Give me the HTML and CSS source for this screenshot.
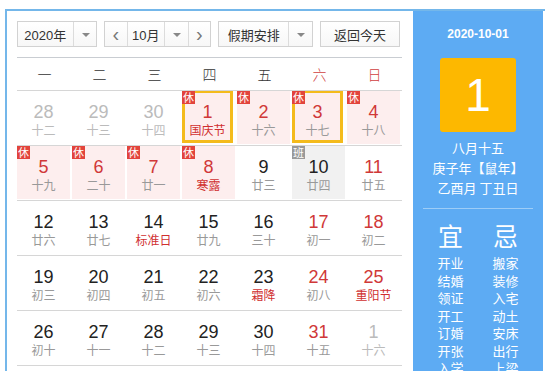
FILE: index.html
```html
<!DOCTYPE html>
<html>
	<head>
		<meta charset="UTF-8">
		<title>万年历</title>
		<link rel="stylesheet" href="styles.css">
	</head>
	<body>
		<div class="calendar">
			<div class="main">
				<div class="toolbar">
					<div class="select year"><span class="label">2020年</span><span class="arrow"></span></div>
					<div class="group">
						<span class="nav">&lsaquo;</span>
						<div class="select month"><span class="label">10月</span><span class="arrow"></span></div>
						<span class="nav">&rsaquo;</span>
					</div>
					<div class="select holiday"><span class="label">假期安排</span><span class="arrow"></span></div>
					<div class="button">返回今天</div>
				</div>
				<div class="weekdays">
					<span>一</span><span>二</span><span>三</span><span>四</span><span>五</span><span class="weekend">六</span><span class="weekend">日</span>
				</div>
				<div class="week">
					<div class="cell other"><b>28</b><i>十二</i></div>
					<div class="cell other"><b>29</b><i>十三</i></div>
					<div class="cell other"><b>30</b><i>十四</i></div>
					<div class="cell rest selected"><em>休</em><b>1</b><i class="fest">国庆节</i></div>
					<div class="cell rest"><em>休</em><b>2</b><i>十六</i></div>
					<div class="cell rest selected"><em>休</em><b>3</b><i>十七</i></div>
					<div class="cell rest"><em>休</em><b>4</b><i>十八</i></div>
				</div>
				<div class="week">
					<div class="cell rest"><em>休</em><b>5</b><i>十九</i></div>
					<div class="cell rest"><em>休</em><b>6</b><i>二十</i></div>
					<div class="cell rest"><em>休</em><b>7</b><i>廿一</i></div>
					<div class="cell rest"><em>休</em><b>8</b><i class="fest">寒露</i></div>
					<div class="cell"><b>9</b><i>廿三</i></div>
					<div class="cell work"><em>班</em><b>10</b><i>廿四</i></div>
					<div class="cell weekend"><b>11</b><i>廿五</i></div>
				</div>
				<div class="week">
					<div class="cell"><b>12</b><i>廿六</i></div>
					<div class="cell"><b>13</b><i>廿七</i></div>
					<div class="cell"><b>14</b><i class="fest">标准日</i></div>
					<div class="cell"><b>15</b><i>廿九</i></div>
					<div class="cell"><b>16</b><i>三十</i></div>
					<div class="cell weekend"><b>17</b><i>初一</i></div>
					<div class="cell weekend"><b>18</b><i>初二</i></div>
				</div>
				<div class="week">
					<div class="cell"><b>19</b><i>初三</i></div>
					<div class="cell"><b>20</b><i>初四</i></div>
					<div class="cell"><b>21</b><i>初五</i></div>
					<div class="cell"><b>22</b><i>初六</i></div>
					<div class="cell"><b>23</b><i class="fest">霜降</i></div>
					<div class="cell weekend"><b>24</b><i>初八</i></div>
					<div class="cell weekend"><b>25</b><i class="fest">重阳节</i></div>
				</div>
				<div class="week">
					<div class="cell"><b>26</b><i>初十</i></div>
					<div class="cell"><b>27</b><i>十一</i></div>
					<div class="cell"><b>28</b><i>十二</i></div>
					<div class="cell"><b>29</b><i>十三</i></div>
					<div class="cell"><b>30</b><i>十四</i></div>
					<div class="cell weekend"><b>31</b><i>十五</i></div>
					<div class="cell other"><b>1</b><i>十六</i></div>
				</div>
			</div>
			<div class="side">
				<div class="date">2020-10-01</div>
				<div class="today">1</div>
				<div class="lunar">
					<p>八月十五</p>
					<p>庚子年【鼠年】</p>
					<p>乙酉月 丁丑日</p>
				</div>
				<div class="almanac">
					<div class="col">
						<h2>宜</h2>
						<p>开业</p><p>结婚</p><p>领证</p><p>开工</p><p>订婚</p><p>开张</p><p>入学</p>
					</div>
					<div class="col">
						<h2>忌</h2>
						<p>搬家</p><p>装修</p><p>入宅</p><p>动土</p><p>安床</p><p>出行</p><p>上梁</p>
					</div>
				</div>
			</div>
		</div>
	</body>
</html>
```
FILE: styles.css
```css
body {
	margin: 0;
	background: #fff;
	color: #333;
	font-family: "Liberation Sans", Arial, "Noto Sans CJK SC", sans-serif;
	overflow: hidden;
}
.calendar {
	display: flex;
	width: 538px;
	margin: 9px 0 0 5px;
	border: 2px solid #74b7ea;
	border-right: 0;
	border-bottom: 0;
	height: 400px;
}
.main {
	width: 385px;
	padding: 10px 11px 0 10px;
	background: #fff;
}
.toolbar {
	display: flex;
	gap: 7px;
	height: 26px;
	font-size: 13px;
	margin-bottom: 10px;
}
.select, .group, .button {
	display: flex;
	align-items: stretch;
	border: 1px solid #d2d2d2;
	box-sizing: border-box;
	background: linear-gradient(#fff, #f7f7f7);
}
.select .label {
	display: flex;
	align-items: center;
	justify-content: center;
	border-right: 1px solid #dcdcdc;
}
.select .arrow {
	width: 23px;
	position: relative;
}
.select .arrow::after {
	content: "";
	position: absolute;
	left: 8px;
	top: 11px;
	border: 4px solid transparent;
	border-top: 4px solid #888;
	border-bottom: 0;
}
.year { width: 80px; }
.year .label { width: 56px; }
.group { width: 107px; }
.month { border: 0; background: none; width: 61px; }
.month .label { width: 37px; }
.month .arrow { border-right: 1px solid #dcdcdc; }
.group .nav {
	width: 23px;
	display: flex;
	align-items: center;
	justify-content: center;
	color: #777;
	font-size: 20px;
	border-right: 1px solid #dcdcdc;
}
.group .nav:last-child { border-right: 0; }
.holiday { width: 95px; }
.holiday .label { width: 71px; }
.button {
	width: 80px;
	align-items: center;
	justify-content: center;
}
.weekdays {
	display: grid;
	grid-template-columns: repeat(7, 1fr);
	border-top: 1px solid #c9cdd2;
	border-bottom: 1px solid #d6d6d6;
	height: 34px;
	box-sizing: border-box;
	align-items: center;
	text-align: center;
	font-size: 14px;
	font-family: "Noto Sans CJK SC", sans-serif;
	font-weight: 300;
}
.weekdays .weekend { color: #d04040; }
.week {
	display: grid;
	grid-template-columns: repeat(7, 53px);
	column-gap: 2px;
	height: 55px;
	padding: 0 0 1px 0;
	box-sizing: border-box;
	border-bottom: 1px solid #d6d6d6;
}
.cell {
	position: relative;
	display: flex;
	flex-direction: column;
	align-items: center;
	padding-top: 11px;
	box-sizing: border-box;
}
.cell b {
	font-weight: normal;
	font-size: 18px;
	line-height: 20px;
	color: #222;
}
.cell i {
	font-style: normal;
	font-size: 12px;
	line-height: 16px;
	color: #999;
	font-family: "Noto Sans CJK SC", sans-serif;
}
.cell i.fest { color: #d03030; }
.cell em {
	position: absolute;
	top: 0;
	left: 0;
	width: 13px;
	height: 13px;
	line-height: 13px;
	font-size: 11px;
	font-style: normal;
	color: #fff;
	background: #e2443c;
	text-align: center;
	font-family: "Noto Sans CJK SC", sans-serif;
}
.other b, .other i { color: #bbb; }
.rest { background: #fdeeee; }
.rest b, .weekend b { color: #d03838; }
.work { background: #f1f1f1; }
.work em { background: #999; }
.selected {
	border: 3px solid #f4bb1c;
	border-width: 2px 3px 3px 3px;
	padding-top: 9px;
	width: 51px;
	height: 52px;
}
.selected em { top: -2px; left: -3px; }
.side {
	width: 130px;
	background: #5dabf3;
	color: #fff;
	text-align: center;
	font-family: "Noto Sans CJK SC", sans-serif;
}
.date {
	font-family: "Liberation Sans", Arial, sans-serif;
	font-weight: bold;
	font-size: 12px;
	margin-top: 16px;
	line-height: 14px;
}
.today {
	width: 76px;
	height: 74px;
	margin: 17px auto 0;
	background: #fdb800;
	border-radius: 3px;
	font-family: "Liberation Sans", Arial, sans-serif;
	font-size: 46px;
	line-height: 74px;
}
.lunar {
	margin-top: 6px;
	font-size: 13px;
	line-height: 20px;
}
.lunar p { margin: 0; }
.almanac {
	display: flex;
	justify-content: space-around;
	margin: 10px 10px 0;
	padding-top: 8px;
	border-top: 1px solid #9dcdf7;
}
.col { width: 50px; }
.col h2 {
	margin: 0;
	font-size: 25px;
	font-weight: normal;
	line-height: 37px;
}
.col p {
	margin: 0;
	font-size: 13px;
	line-height: 17.5px;
}
```
